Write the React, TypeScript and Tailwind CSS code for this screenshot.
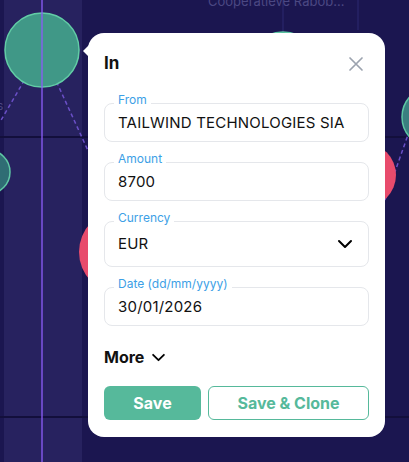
import React from 'react';

const fieldBox = "relative border border-gray-200 rounded-lg flex items-center pl-[13px] pr-3";
const fieldLabel = "absolute -top-[11px] left-[9px] bg-white px-1 text-[12px] leading-[14px] text-[#3d9fe6]";
const fieldValue = "text-[15px] leading-5 text-[#111] tracking-[0.2px]";

const Chevron = ({ className }: { className?: string }) => (
  <svg className={className} viewBox="0 0 16 10" fill="none" stroke="currentColor" strokeWidth="2" strokeLinecap="round" strokeLinejoin="round">
    <path d="M2 2l6 6 6-6" />
  </svg>
);

const Field = ({ label, value, tall, select }: { label: string; value: string; tall?: boolean; select?: boolean }) => (
  <div className={fieldBox + (tall ? " h-[46px]" : " h-[39px]")}>
    <span className={fieldLabel}>{label}</span>
    <span className={fieldValue + " flex-1"}>{value}</span>
    {select && <Chevron className="w-[16px] h-[10px] text-black mr-[3px]" />}
  </div>
);

const Chart = () => (
  <svg className="absolute inset-0" width="409" height="462" viewBox="0 0 409 462">
    <rect x="0" y="0" width="409" height="462" fill="#1b1650" />
    <rect x="4" y="0" width="78" height="462" fill="#27225f" />
    <line x1="0" y1="137" x2="409" y2="137" stroke="#130f3c" strokeWidth="2" />
    <line x1="0" y1="417" x2="409" y2="417" stroke="#130f3c" strokeWidth="2" />
    <line x1="283" y1="0" x2="283" y2="40" stroke="#2d2870" strokeWidth="1" />
    <line x1="358" y1="0" x2="358" y2="30" stroke="#2d2870" strokeWidth="1" />
    <text x="208" y="6" fontSize="13" fill="#4b4883" fontFamily="Inter, sans-serif">Cooperatieve Rabob...</text>
    <text x="-6" y="110" fontSize="12" fill="#4b4883" fontFamily="Inter, sans-serif">ls</text>
    <line x1="42" y1="50" x2="0" y2="122" stroke="#6a4fc7" strokeWidth="1.5" strokeDasharray="4 3" />
    <line x1="42" y1="50" x2="90" y2="155" stroke="#6a4fc7" strokeWidth="1.5" strokeDasharray="4 3" />
    <line x1="385" y1="200" x2="409" y2="132" stroke="#6a4fc7" strokeWidth="1.5" strokeDasharray="4 3" />
    <circle cx="-12" cy="172" r="22" fill="#2f6d74" stroke="#5ec7a4" strokeWidth="1.5" />
    <circle cx="283" cy="68" r="36" fill="#3f9487" stroke="#5ec7a4" strokeWidth="1.5" />
    <circle cx="121" cy="252" r="42" fill="#e84b6c" />
    <circle cx="364" cy="175" r="32" fill="#e84b6c" />
    <circle cx="432" cy="117" r="30" fill="#3a7f80" stroke="#5ec7a4" strokeWidth="1.5" />
    <circle cx="42" cy="50" r="37" fill="#409887" stroke="#62cda6" strokeWidth="1.5" />
    <line x1="42" y1="0" x2="42" y2="462" stroke="#8b5cf6" strokeWidth="1.5" opacity="0.9" />
  </svg>
);

const Popover = () => (
  <div className="absolute left-[88px] top-[33px] w-[297px] bg-white rounded-2xl px-4 pt-[19px] pb-[17px] font-['Inter',sans-serif]">
    <div className="absolute -left-[5px] top-[12px] w-0 h-0 border-y-[6px] border-y-transparent border-r-[6px] border-r-white" />
    <div className="flex items-center justify-between h-6">
      <span className="text-[17px] font-bold text-[#111]">In</span>
      <svg className="w-[16px] h-[16px] mr-[5px]" viewBox="0 0 16 16" fill="none" stroke="#9ca3af" strokeWidth="1.7" strokeLinecap="round">
        <path d="M2 2l12 12M14 2L2 14" />
      </svg>
    </div>
    <div className="mt-[27px] flex flex-col gap-5">
      <Field label="From" value="TAILWIND TECHNOLOGIES SIA" />
      <Field label="Amount" value="8700" />
      <Field label="Currency" value="EUR" tall select />
      <Field label="Date (dd/mm/yyyy)" value="30/01/2026" />
    </div>
    <div className="mt-[19px] h-6 flex items-center gap-[7px]">
      <span className="text-[16px] font-bold text-[#111]">More</span>
      <Chevron className="w-[15px] h-[9px] text-black" />
    </div>
    <div className="mt-[17px] flex gap-[7px]">
      <button className="w-[97px] h-[34px] rounded-md bg-[#56b99b] text-white text-[16px] font-bold">Save</button>
      <button className="flex-1 h-[34px] rounded-md border border-[#56b99b] text-[#56b99b] text-[16px] font-bold">Save &amp; Clone</button>
    </div>
  </div>
);

export default function App() {
  return (
    <div className="relative w-[409px] h-[462px] overflow-hidden bg-[#1b1650]">
      <Chart />
      <Popover />
    </div>
  );
}
